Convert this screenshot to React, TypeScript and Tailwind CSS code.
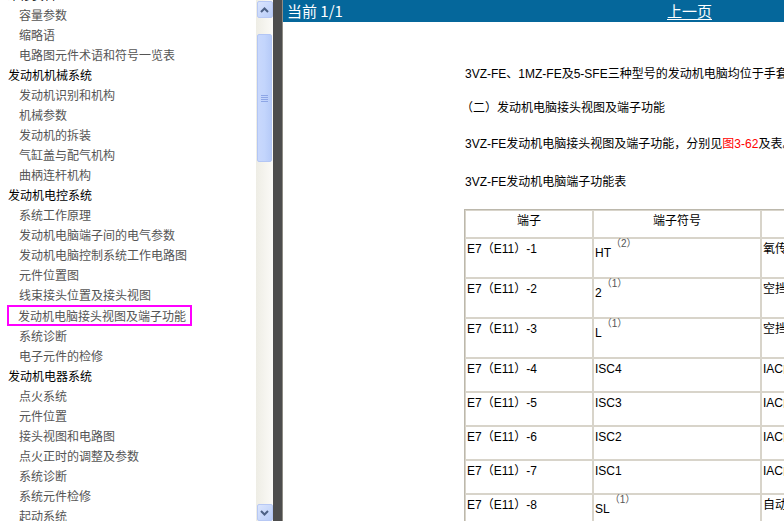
import React from "react";

type NavItem = { label: string; group?: boolean; active?: boolean };

const navItems: NavItem[] = [
  { label: "维修资料", group: true },
  { label: "容量参数" },
  { label: "缩略语" },
  { label: "电路图元件术语和符号一览表" },
  { label: "发动机机械系统", group: true },
  { label: "发动机识别和机构" },
  { label: "机械参数" },
  { label: "发动机的拆装" },
  { label: "气缸盖与配气机构" },
  { label: "曲柄连杆机构" },
  { label: "发动机电控系统", group: true },
  { label: "系统工作原理" },
  { label: "发动机电脑端子间的电气参数" },
  { label: "发动机电脑控制系统工作电路图" },
  { label: "元件位置图" },
  { label: "线束接头位置及接头视图" },
  { label: "发动机电脑接头视图及端子功能", active: true },
  { label: "系统诊断" },
  { label: "电子元件的检修" },
  { label: "发动机电器系统", group: true },
  { label: "点火系统" },
  { label: "元件位置" },
  { label: "接头视图和电路图" },
  { label: "点火正时的调整及参数" },
  { label: "系统诊断" },
  { label: "系统元件检修" },
  { label: "起动系统" },
];

type Row = { pin: string; sym: string; note?: string; desc: string };

const rows: Row[] = [
  { pin: "E7（E11）-1", sym: "HT", note: "（2）", desc: "氧传感器加热器" },
  { pin: "E7（E11）-2", sym: "2", note: "（1）", desc: "空挡起动开关" },
  { pin: "E7（E11）-3", sym: "L", note: "（1）", desc: "空挡起动开关" },
  { pin: "E7（E11）-4", sym: "ISC4", desc: "IAC阀" },
  { pin: "E7（E11）-5", sym: "ISC3", desc: "IAC阀" },
  { pin: "E7（E11）-6", sym: "ISC2", desc: "IAC阀" },
  { pin: "E7（E11）-7", sym: "ISC1", desc: "IAC阀" },
  { pin: "E7（E11）-8", sym: "SL", note: "（1）", desc: "自动变速器电磁阀" },
];

const font = "font-['SimSun','Noto_Sans_CJK_SC',sans-serif]";
const mixed = "font-['Liberation_Sans','Noto_Sans_CJK_SC',sans-serif]";

function Arrow({ up }: { up?: boolean }) {
  return (
    <div className="w-[16px] h-[17px] mx-auto rounded-[2px] border border-[#b7c8f4] bg-gradient-to-br from-[#dbe5fd] to-[#b9cdf8] flex items-center justify-center">
      <svg width="9" height="6" viewBox="0 0 9 6">
        <path
          d={up ? "M1 5 L4.5 1.5 L8 5" : "M1 1 L4.5 4.5 L8 1"}
          fill="none"
          stroke="#4d6185"
          strokeWidth="2"
        />
      </svg>
    </div>
  );
}

function ScrollBar() {
  return (
    <div className="w-[17px] h-full flex flex-col bg-gradient-to-r from-[#eeede5] to-[#fbfaf7] pt-[1px]">
      <Arrow up />
      <div className="flex-1 relative">
        <div className="absolute left-[1px] top-[16px] w-[15px] h-[128px] rounded-[2px] border border-[#b3c6f5] bg-gradient-to-r from-[#c9d8fc] via-[#c3d5fc] to-[#b7cbf8] flex items-center justify-center">
          <div className="flex flex-col gap-[1px]">
            <div className="w-[7px] h-[1px] bg-[#8ea6e6]" />
            <div className="w-[7px] h-[1px] bg-[#8ea6e6]" />
            <div className="w-[7px] h-[1px] bg-[#8ea6e6]" />
            <div className="w-[7px] h-[1px] bg-[#8ea6e6]" />
          </div>
        </div>
      </div>
      <Arrow />
    </div>
  );
}

function Sidebar() {
  return (
    <div className="w-[273px] h-full flex bg-white">
      <div className="flex-1 overflow-hidden">
        <ul className={`-mt-[15px] text-[12px] leading-[20px] ${font}`}>
          {navItems.map((it, i) => (
            <li
              key={i}
              className={it.group ? "pl-[8px] text-black" : "pl-[8px] text-[#555555]"}
            >
              {it.active ? (
                <span className="inline-block border-2 border-[#ff00ff] pl-[9px] pr-[4px] leading-[17px] -ml-[1px]">
                  {it.label}
                </span>
              ) : (
                <span className={it.group ? "" : "pl-[11px]"}>{it.label}</span>
              )}
            </li>
          ))}
        </ul>
      </div>
      <ScrollBar />
    </div>
  );
}

function Content() {
  return (
    <div className="flex-1 h-full flex flex-col bg-white overflow-hidden">
      <div className={`h-[22px] bg-[#05679b] text-white text-[15px] flex items-center ${font}`}>
        <span className="pl-[4px] w-[384px]">当前 1/1</span>
        <span className="underline underline-offset-2">上一页</span>
      </div>
      <div className={`pl-[182px] pt-[43px] text-[12px] whitespace-nowrap ${mixed}`}>
        <p className="h-[17px]">3VZ-FE、1MZ-FE及5-SFE三种型号的发动机电脑均位于手套箱后面。</p>
        <p className="mt-[17px] -ml-[4px] h-[17px]">（二）发动机电脑接头视图及端子功能</p>
        <p className="mt-[19px] h-[17px]">
          3VZ-FE发动机电脑接头视图及端子功能，分别见<span className="text-[#ff0000]">图3-62</span>及表。
        </p>
        <p className="mt-[21px] h-[17px]">3VZ-FE发动机电脑端子功能表</p>
        <table className="mt-[19px] -ml-[1px] w-[560px] table-fixed border border-[#bcb8ac] border-separate border-spacing-0 text-[12px]">
          <colgroup>
            <col className="w-[128px]" />
            <col className="w-[168px]" />
            <col className="w-[264px]" />
          </colgroup>
          <thead>
            <tr className="h-[28px]">
              <th className="border border-[#d8d4ca] font-normal align-top pt-[1px]">端子</th>
              <th className="border border-[#d8d4ca] font-normal align-top pt-[1px]">端子符号</th>
              <th className="border border-[#d8d4ca] font-normal align-top pt-[1px]">端子功能</th>
            </tr>
          </thead>
          <tbody>
            {rows.map((r) => (
              <tr key={r.pin} className={r.note ? "h-[40px]" : "h-[34px]"}>
                <td className="border border-[#d8d4ca] align-top pl-[1px] pt-[1px]">{r.pin}</td>
                <td className="border border-[#d8d4ca] align-top pl-[1px]">
                  {r.note ? (
                    <span className="inline-block pt-[5px]">
                      {r.sym}
                      <sup className="text-[10px] text-[#555] align-[5px]">{r.note}</sup>
                    </span>
                  ) : (
                    <span className="inline-block pt-[1px]">{r.sym}</span>
                  )}
                </td>
                <td className="border border-[#d8d4ca] align-top pl-[1px] pt-[1px]">{r.desc}</td>
              </tr>
            ))}
          </tbody>
        </table>
      </div>
    </div>
  );
}

export default function App() {
  return (
    <div className="w-[784px] h-[521px] flex overflow-hidden bg-white">
      <Sidebar />
      <div className="w-[10px] h-full bg-[#4d4d4d] border-r border-[#8f8d86]" />
      <Content />
    </div>
  );
}
